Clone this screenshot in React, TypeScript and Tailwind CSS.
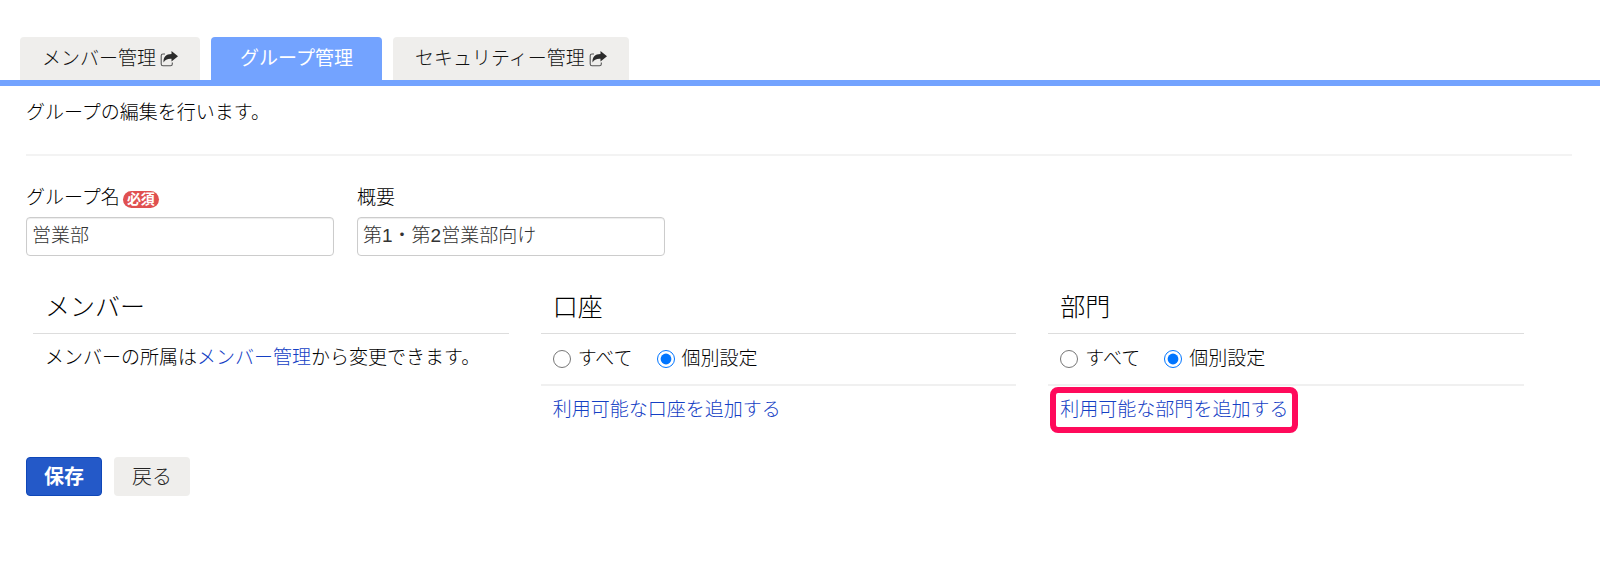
import React, { useState } from 'react';

type Tab = {
  label: string;
  external?: boolean;
  active?: boolean;
};

type Scope = 'all' | 'custom';

const tabs: Tab[] = [
  { label: 'メンバー管理', external: true },
  { label: 'グループ管理', active: true },
  { label: 'セキュリティー管理', external: true },
];

function ShareIcon() {
  return (
    <svg viewBox="0 0 18 16" className="h-4 w-[18px]" fill="none" aria-hidden="true">
      <path d="M5 3H3Q1.2 3 1.2 4.800V13Q1.2 14.800 3 14.800H10.500Q12.300 14.800 12.300 13V11.500" stroke="#555555" strokeWidth="1.1" />
      <path d="M11.500 0L18 5.200L11.500 10.500V7.700C7.500 7.500 5 8.500 3.600 11.500C3 6 6 3 11.500 2.900Z" fill="#2b2b2b" />
    </svg>
  );
}

type PanelProps = {
  id: string;
  title: string;
  highlighted?: boolean;
};

function ScopePanel({ id, title, highlighted }: PanelProps) {
  const [scope, setScope] = useState<Scope>('custom');

  return (
    <section className="flex-1">
      <h2 className="border-b border-[#dddddd] px-3 pt-1 pb-2 text-[25px] leading-9">{title}</h2>
      <div className="flex h-[52px] items-center gap-6 border-b-2 border-[#f0f0f0] px-3">
        <label className="flex items-center gap-[7px]">
          <input
            type="radio"
            name={id}
            className="size-[18px] accent-[#0075ff]"
            checked={scope === 'all'}
            onChange={() => setScope('all')}
          />
          すべて
        </label>
        <label className="flex items-center gap-[7px]">
          <input
            type="radio"
            name={id}
            className="size-[18px] accent-[#0075ff]"
            checked={scope === 'custom'}
            onChange={() => setScope('custom')}
          />
          個別設定
        </label>
      </div>
      <div className="flex px-3 pt-2">
        <a href="#" className="relative py-1 text-[#1440c4]">
          利用可能な{title}を追加する
          {highlighted && <span className="absolute -inset-x-[10px] -inset-y-[7px] rounded-lg border-6 border-[#ff0a5b]" />}
        </a>
      </div>
    </section>
  );
}

function App() {
  const [name, setName] = useState('営業部');
  const [summary, setSummary] = useState('第1・第2営業部向け');

  return (
    <div className="min-h-screen bg-white pt-[37px] font-['Liberation_Sans','Noto_Sans_CJK_JP',sans-serif] text-[19px] leading-6 font-light text-black">
      <nav className="flex items-end gap-[11px] border-b-6 border-[#73a3ff] pl-5">
        {tabs.map((tab) => (
          <a
            key={tab.label}
            href="#"
            className={`flex h-[43px] items-center gap-1 rounded-t ${
              tab.active ? 'bg-[#73a3ff] px-[29px] font-normal text-white' : 'bg-[#efeeec] px-[22px] text-[#111111]'
            }`}
          >
            {tab.label}
            {tab.external && <ShareIcon />}
          </a>
        ))}
      </nav>

      <main className="pt-[15px] pr-7 pl-[26px]">
        <p>グループの編集を行います。</p>
        <hr className="mt-[29px] border-t-2 border-[#f3f3f3]" />

        <form onSubmit={(event) => event.preventDefault()}>
          <div className="mt-[30px] flex gap-[23px]">
            <div className="w-[308px]">
              <div className="flex items-end gap-[3px]">
                <label htmlFor="group-name">グループ名</label>
                <span className="mb-0.5 rounded-full bg-[#e05050] px-1 text-sm leading-[17px] font-bold text-white">必須</span>
              </div>
              <input
                id="group-name"
                className="mt-[7px] h-[39px] w-full rounded border border-[#cccccc] px-[5px] pb-1.5 text-[#333333] shadow-[inset_0_1px_1px_rgba(0,0,0,0.075)]"
                value={name}
                onChange={(event) => setName(event.target.value)}
              />
            </div>
            <div className="w-[308px]">
              <label htmlFor="group-summary" className="block">
                概要
              </label>
              <input
                id="group-summary"
                className="mt-[7px] h-[39px] w-full rounded border border-[#cccccc] px-[5px] pb-1.5 text-[#333333] shadow-[inset_0_1px_1px_rgba(0,0,0,0.075)]"
                value={summary}
                onChange={(event) => setSummary(event.target.value)}
              />
            </div>
          </div>

          <div className="mt-[29px] mr-12 ml-[7px] flex gap-8">
            <section className="flex-1">
              <h2 className="border-b border-[#dddddd] px-3 pt-1 pb-2 text-[25px] leading-9">メンバー</h2>
              <p className="px-3 pt-3">
                メンバーの所属は
                <a href="#" className="text-[#1440c4]">
                  メンバー管理
                </a>
                から変更できます。
              </p>
            </section>
            <ScopePanel id="account" title="口座" />
            <ScopePanel id="department" title="部門" highlighted />
          </div>

          <div className="mt-[31px] flex gap-3">
            <button type="submit" className="h-[39px] rounded border border-[#0f47b8] bg-[#2459c8] px-[17px] text-xl font-bold text-white">
              保存
            </button>
            <button type="button" className="h-[39px] rounded bg-[#efeeec] px-[18px] text-xl text-[#222222]">
              戻る
            </button>
          </div>
        </form>
      </main>
    </div>
  );
}

export default App;
